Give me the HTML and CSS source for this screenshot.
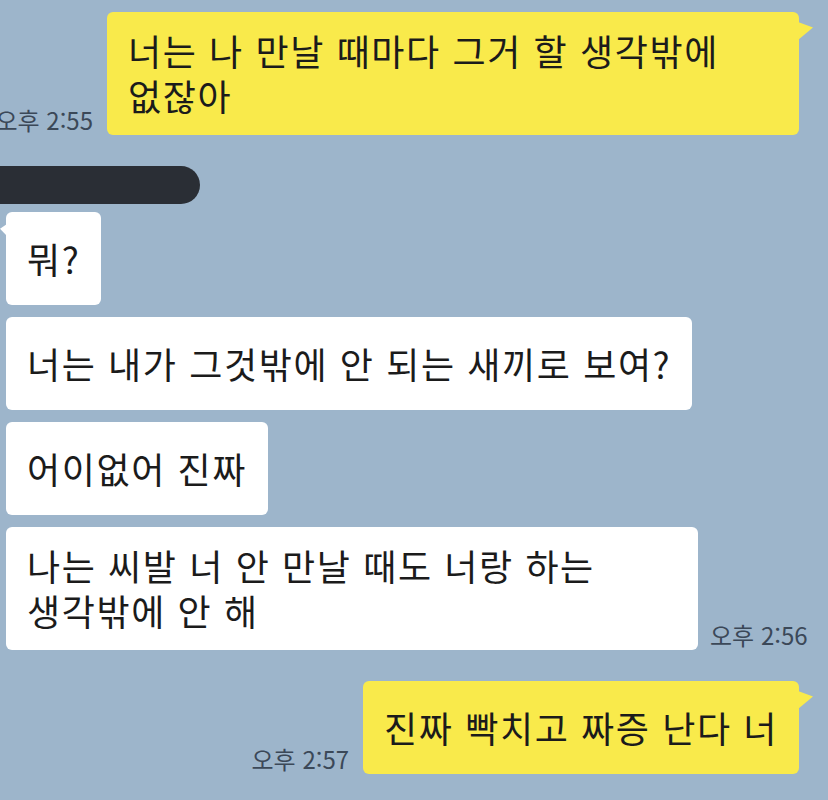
FILE: index.html
```html
<!DOCTYPE html>
<html lang="ko">
<head>
    <meta charset="UTF-8">
    <meta name="viewport" content="width=device-width, initial-scale=1.0">
    <title>채팅</title>
    <link rel="stylesheet" href="styles.css">
</head>
<body>

<div class="chat">
    <div class="row row-me">
        <span class="time">오후 2:55</span>
        <div class="bubble bubble-me tail">너는 나 만날 때마다 그거 할 생각밖에 없잖아</div>
    </div>

    <div class="name-bar"></div>

    <div class="row">
        <div class="bubble tail">뭐?</div>
    </div>
    <div class="row">
        <div class="bubble">너는 내가 그것밖에 안 되는 새끼로 보여?</div>
    </div>
    <div class="row">
        <div class="bubble">어이없어 진짜</div>
    </div>
    <div class="row">
        <div class="bubble">나는 씨발 너 안 만날 때도 너랑 하는 생각밖에 안 해</div>
        <span class="time">오후 2:56</span>
    </div>

    <div class="row row-me row-new">
        <span class="time">오후 2:57</span>
        <div class="bubble bubble-me tail">진짜 빡치고 짜증 난다 너</div>
    </div>
</div>

</body>
</html>
```

FILE: styles.css
```css
body {
    margin: 0;
    padding: 0;
    background-color: #9db5cb;
    font-family: "Noto Sans CJK KR", "Noto Sans", sans-serif;
    overflow: hidden;
}
.chat {
    display: flex;
    flex-direction: column;
    gap: 12px;
    padding: 12px 29px 0 6px;
    height: 800px;
    box-sizing: border-box;
}
.row {
    display: flex;
    align-items: flex-end;
    gap: 12px;
}
.row-me {
    justify-content: flex-end;
    gap: 14px;
}
.row-new {
    margin-top: 19px;
}
.bubble {
    position: relative;
    flex-shrink: 0;
    max-width: 692px;
    min-height: 93px;
    box-sizing: border-box;
    display: flex;
    align-items: center;
    padding: 16px 21px 17px;
    background-color: #ffffff;
    border-radius: 6px;
    color: #1b1b1b;
    font-size: 36px;
    line-height: 45px;
    letter-spacing: 1.6px;
    word-break: keep-all;
}
.bubble-me {
    background-color: #f9ea4b;
}
.tail::before {
    content: "";
    position: absolute;
    top: 12px;
    left: -6px;
    width: 7px;
    height: 12px;
    background-color: #ffffff;
    clip-path: polygon(100% 0, 0 40%, 100% 100%);
}
.bubble-me.tail::before {
    top: 10px;
    left: auto;
    right: -14px;
    width: 15px;
    height: 18px;
    background-color: #f9ea4b;
    clip-path: polygon(0 0, 100% 30%, 0 100%);
}
.time {
    flex-shrink: 0;
    white-space: nowrap;
    font-size: 24px;
    line-height: 24px;
    margin-bottom: 3px;
    color: #3b4858;
}
.name-bar {
    width: 220px;
    height: 38px;
    margin: 19px 0 -4px -26px;
    border-radius: 19px;
    background-color: #2a2e35;
}
```
